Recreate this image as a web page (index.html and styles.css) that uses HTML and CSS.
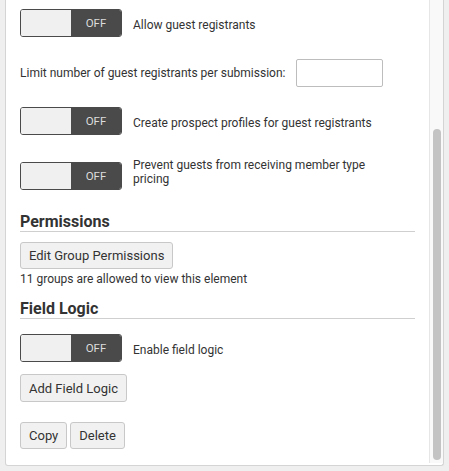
FILE: index.html
```html
<!DOCTYPE html>
<html>
<head>
<meta charset="utf-8">
<link rel="stylesheet" href="styles.css">
</head>
<body>
<div class="panel">
  <div class="content">
    <div class="row toggle-row r1">
      <div class="toggle"><span class="t-off-side"></span><span class="t-label">OFF</span></div>
      <span class="toggle-text">Allow guest registrants</span>
    </div>
    <div class="row limit-row">
      <span class="limit-label">Limit number of guest registrants per submission:</span>
      <input class="limit-input" type="text">
    </div>
    <div class="row toggle-row r3">
      <div class="toggle"><span class="t-off-side"></span><span class="t-label">OFF</span></div>
      <span class="toggle-text">Create prospect profiles for guest registrants</span>
    </div>
    <div class="row toggle-row r4">
      <div class="toggle"><span class="t-off-side"></span><span class="t-label">OFF</span></div>
      <span class="toggle-text narrow">Prevent guests from receiving member type pricing</span>
    </div>
    <h3 class="section-title perm-title">Permissions</h3>
    <button class="btn edit-perm">Edit Group Permissions</button>
    <p class="note">11 groups are allowed to view this element</p>
    <h3 class="section-title logic-title">Field Logic</h3>
    <div class="row toggle-row r5">
      <div class="toggle"><span class="t-off-side"></span><span class="t-label">OFF</span></div>
      <span class="toggle-text">Enable field logic</span>
    </div>
    <button class="btn add-logic">Add Field Logic</button>
    <div class="actions">
      <button class="btn small">Copy</button>
      <button class="btn small">Delete</button>
    </div>
  </div>
  <div class="scrolltrack"><div class="thumb"></div></div>
</div>
</body>
</html>
```
FILE: styles.css
```css
html, body {
  margin: 0;
  padding: 0;
  background: #efefef;
  font-family: Roboto, "Liberation Sans", Arial, sans-serif;
  color: #333;
}
.panel {
  margin-left: 5px;
  width: 437px;
  height: 465px;
  background: #fff;
  border: 1px solid #d4d4d4;
  border-top: none;
  border-radius: 0 0 3px 3px;
  display: flex;
}
.content {
  flex: 1;
  padding: 9px 14px 0 14px;
  display: flex;
  flex-direction: column;
  align-items: flex-start;
}
.row {
  display: flex;
  align-items: center;
  align-self: stretch;
}
.toggle {
  width: 100px;
  height: 26px;
  border: 1px solid #4a4a4a;
  border-radius: 3px;
  display: flex;
  overflow: hidden;
  flex-shrink: 0;
}
.t-off-side {
  width: 50px;
  background: #f0f0f0;
}
.t-label {
  flex: 1;
  background: #4a4a4a;
  color: #dcdcdc;
  font-size: 11.5px;
  display: flex;
  align-items: center;
  justify-content: center;
}
.toggle-text {
  margin-left: 11px;
  font-size: 12px;
  line-height: 14px;
  padding-top: 4px;
}
.toggle-text.narrow {
  width: 245px;
  padding-top: 0;
  margin-top: -8px;
}
.limit-row { margin-top: 22px; }
.limit-label { font-size: 12px; }
.limit-input {
  margin: 0 0 0 11px;
  width: 85px;
  height: 26px;
  padding: 0;
  box-sizing: content-box;
  border: 1px solid #bdbdbd;
  border-radius: 2px;
  background: #fff;
}
.r3 { margin-top: 20px; }
.r4 { margin-top: 27px; }
.section-title {
  align-self: stretch;
  margin: 0;
  font-size: 16px;
  font-weight: bold;
  line-height: 18px;
  border-bottom: 1px solid #cfcfcf;
  color: #333;
}
.perm-title { margin-top: 23px; }
.btn {
  font-family: Roboto, "Liberation Sans", Arial, sans-serif;
  font-size: 13px;
  color: #333;
  background: #f1f1f1;
  border: 1px solid #c8c8c8;
  border-radius: 3px;
  height: 27px;
  padding: 0 8px;
  margin: 0;
}
.edit-perm { margin-top: 10px; }
.note {
  margin: 3px 0 0 0;
  font-size: 12px;
  line-height: 14px;
}
.logic-title { margin-top: 14px; }
.r5 { margin-top: 15px; }
.add-logic { margin-top: 12px; height: 28px; }
.actions {
  margin-top: 20px;
  display: flex;
  gap: 3px;
}
.scrolltrack {
  width: 13px;
  height: 463px;
  background: #f9f9f9;
  border-left: 1px solid #e6e6e6;
  display: flex;
  justify-content: center;
}
.thumb {
  width: 8px;
  height: 331px;
  margin-top: 129px;
  background: #c3c3c3;
  border-radius: 4px;
}
```
